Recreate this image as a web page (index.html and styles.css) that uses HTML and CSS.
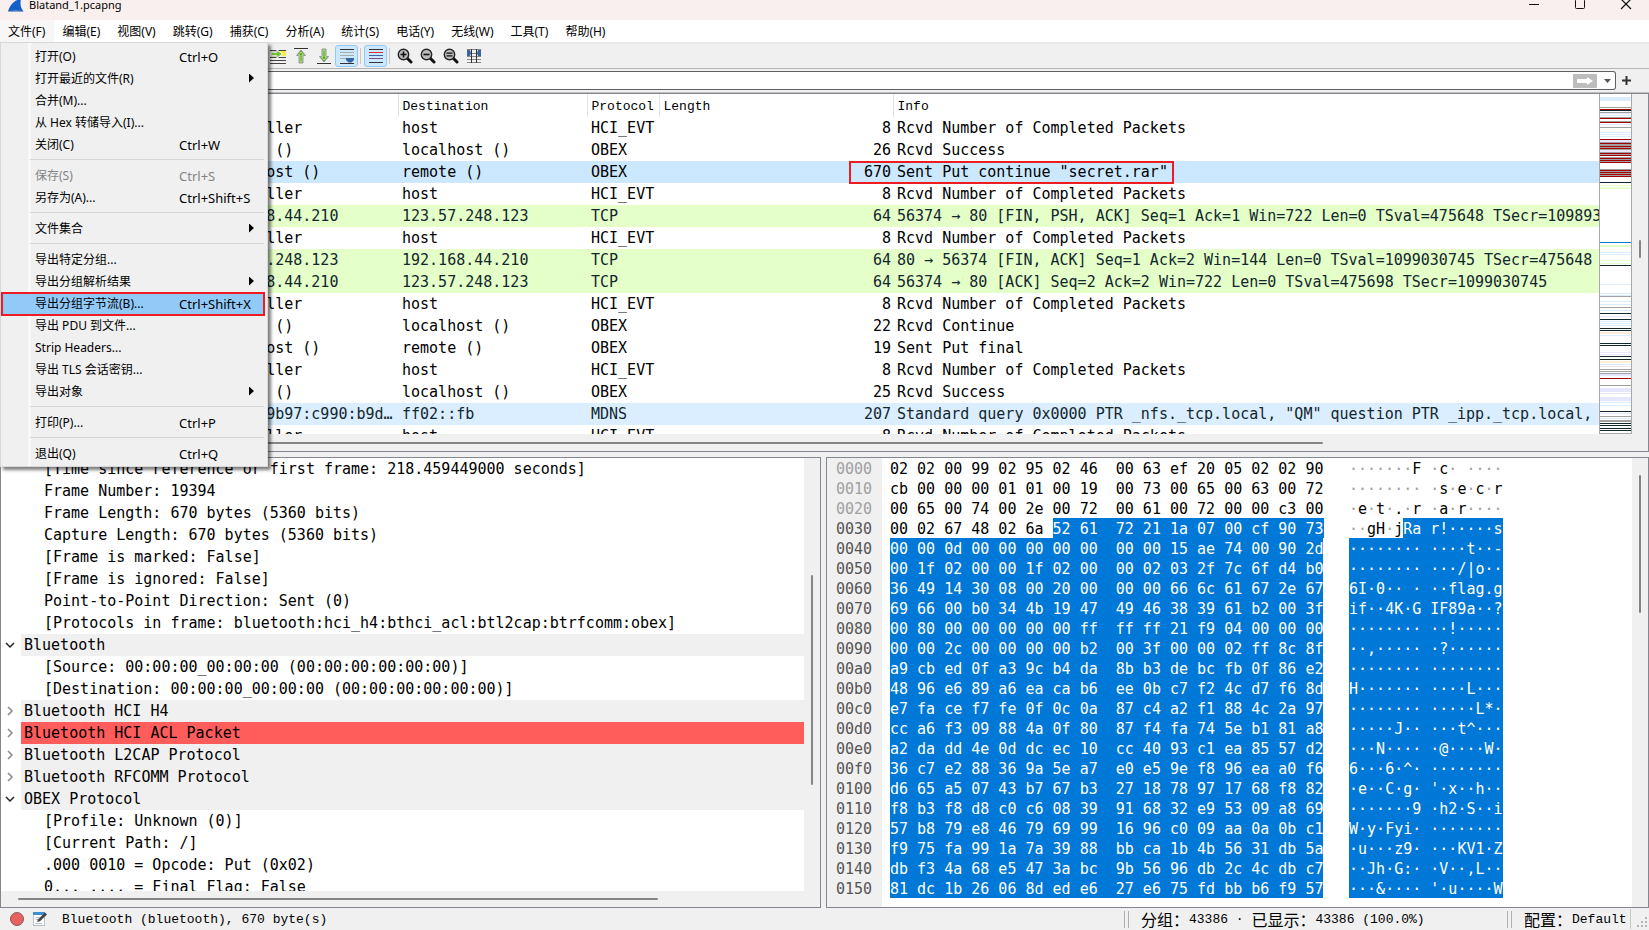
FILE: index.html
```html
<!DOCTYPE html>
<html lang="zh-CN">
<head>
<meta charset="utf-8">
<title>Blatand_1.pcapng</title>
<link rel="stylesheet" href="styles.css">
</head>
<body>
<div class="app">
  <header class="titlebar">
    <svg class="logo" width="16" height="12" viewBox="0 0 16 12"><path d="M0 11.500C2 5 6 0 13 -1C12 4 12.500 8 15.500 11.500Z" fill="#1560c8"/><path d="M0 12C4 10 10 10 15.500 11.500V12Z" fill="#8aa4c4"/></svg>
    <span class="title">Blatand_1.pcapng</span>
    <div class="window-buttons">
      <button aria-label="Minimize"><svg width="12" height="12" viewBox="0 0 12 12"><path d="M1 6.500H11" stroke="#111"/></svg></button>
      <button aria-label="Maximize"><svg width="12" height="12" viewBox="0 0 12 12"><rect x="1.500" y="1.500" width="9" height="9" rx="1" fill="none" stroke="#111"/></svg></button>
      <button aria-label="Close"><svg width="12" height="12" viewBox="0 0 12 12"><path d="M1 1L11 11M11 1L1 11" stroke="#111" stroke-width="1.200"/></svg></button>
    </div>
  </header>

  <nav class="menubar">
    <button class="open">文件(F)</button><button>编辑(E)</button><button>视图(V)</button><button>跳转(G)</button><button>捕获(C)</button><button>分析(A)</button><button>统计(S)</button><button>电话(Y)</button><button>无线(W)</button><button>工具(T)</button><button>帮助(H)</button>
    <div class="menu" role="menu">
      <button class="item"><span>打开(O)</span><kbd>Ctrl+O</kbd></button>
      <button class="item sub"><span>打开最近的文件(R)</span></button>
      <button class="item"><span>合并(M)...</span></button>
      <button class="item"><span>从 Hex 转储导入(I)...</span></button>
      <button class="item"><span>关闭(C)</span><kbd>Ctrl+W</kbd></button>
      <hr>
      <button class="item" disabled><span>保存(S)</span><kbd>Ctrl+S</kbd></button>
      <button class="item"><span>另存为(A)...</span><kbd>Ctrl+Shift+S</kbd></button>
      <hr>
      <button class="item sub"><span>文件集合</span></button>
      <hr>
      <button class="item"><span>导出特定分组...</span></button>
      <button class="item sub"><span>导出分组解析结果</span></button>
      <button class="item active"><span>导出分组字节流(B)...</span><kbd>Ctrl+Shift+X</kbd></button>
      <button class="item"><span>导出 PDU 到文件...</span></button>
      <button class="item"><span>Strip Headers...</span></button>
      <button class="item"><span>导出 TLS 会话密钥...</span></button>
      <button class="item sub"><span>导出对象</span></button>
      <hr>
      <button class="item"><span>打印(P)...</span><kbd>Ctrl+P</kbd></button>
      <hr>
      <button class="item"><span>退出(Q)</span><kbd>Ctrl+Q</kbd></button>
    </div>
  </nav>

  <div class="toolbar">
    <button aria-label="Go to packet"><svg width="16" height="16" viewBox="0 0 16 16"><path d="M0 2.500H16M0 9.500H16M0 12.500H16M0 15.500H16" stroke="#444"/><rect x="10" y="3" width="6" height="5" fill="#fce94f"/><path d="M1 4.500H7V2L12.500 6L7 10V7.500H1Z" fill="#73c22e" stroke="#fff"/><path d="M1 4H7.500M1 8H7.500" stroke="#6a8a50" stroke-width=".6"/></svg></button>
    <button aria-label="First packet"><svg width="16" height="16" viewBox="0 0 16 16"><path d="M1 .5H15" stroke="#333"/><path d="M8 2L12.500 7.500H10V15H6V7.500H3.500Z" fill="#4eaa0a" stroke="#999"/><path d="M8 4L10.500 7H9V14H7V7H5.500Z" fill="#4eaa0a" stroke="#e2f5d0" stroke-width=".7"/></svg></button>
    <button aria-label="Last packet"><svg width="16" height="16" viewBox="0 0 16 16"><path d="M1 15.500H15" stroke="#333"/><path d="M8 14L12.500 8.500H10V1H6V8.500H3.500Z" fill="#4eaa0a" stroke="#999"/><path d="M8 12L10.500 9H9V2H7V9H5.500Z" fill="#4eaa0a" stroke="#e2f5d0" stroke-width=".7"/></svg></button>
    <button class="on" aria-label="Auto scroll"><svg width="16" height="16" viewBox="0 0 16 16"><path d="M1 1.500H15M1 15.500H15" stroke="#333"/><path d="M1 4.500H15M1 7.500H15M1 10.500H15" stroke="#a9ada8"/><path d="M7 10H15V12L12.500 14.500H9.500L7 12Z" fill="#3465a4"/></svg></button>
    <span class="sep"></span>
    <button class="on" aria-label="Colorize"><svg width="16" height="16" viewBox="0 0 16 16"><path d="M1 1.500H15M1 14.500H15" stroke="#333"/><path d="M1 4.500H15" stroke="#ef2929"/><path d="M1 7.500H15" stroke="#3465a4"/><path d="M1 10.500H15" stroke="#75507b"/></svg></button>
    <span class="sep"></span>
    <button aria-label="Zoom in"><svg width="16" height="16" viewBox="0 0 16 16"><path d="M10 10L14 14" stroke="#111" stroke-width="3" stroke-linecap="round"/><circle cx="6.500" cy="6.500" r="5.200" fill="#bbb" stroke="#222" stroke-width="1.400"/><path d="M3.500 6.500H9.500M6.500 3.500V9.500" stroke="#111" stroke-width="1.600"/></svg></button>
    <button aria-label="Zoom out"><svg width="16" height="16" viewBox="0 0 16 16"><path d="M10 10L14 14" stroke="#111" stroke-width="3" stroke-linecap="round"/><circle cx="6.500" cy="6.500" r="5.200" fill="#bbb" stroke="#222" stroke-width="1.400"/><path d="M3.500 6.500H9.500" stroke="#111" stroke-width="1.600"/></svg></button>
    <button aria-label="Normal size"><svg width="16" height="16" viewBox="0 0 16 16"><path d="M10 10L14 14" stroke="#111" stroke-width="3" stroke-linecap="round"/><circle cx="6.500" cy="6.500" r="5.200" fill="#bbb" stroke="#222" stroke-width="1.400"/><path d="M3.500 5.200H9.500M3.500 7.800H9.500" stroke="#111" stroke-width="1.300"/></svg></button>
    <button aria-label="Resize columns"><svg width="16" height="16" viewBox="0 0 16 16"><path d="M1 1.500H15M1 5.500H15M1 8.500H15M1 11.500H15M1 14.500H15" stroke="#888"/><path d="M5.500 1V15M10.500 1V15" stroke="#333"/><path d="M1 2H4L5 5L4 8H1ZM15 2H12L11 5L12 8H15Z" fill="#3465a4"/></svg></button>
  </div>

  <div class="filterbar">
    <div class="filter">
      <input type="text" aria-label="Display filter">
      <button class="apply" aria-label="Apply"><svg width="24" height="14" viewBox="0 0 24 14"><rect width="24" height="14" rx="1" fill="#bdbdbd"/><path d="M4 5H14V3L20 7L14 11V9H4Z" fill="#fff"/></svg></button>
      <button class="drop" aria-label="History"><svg width="7" height="4" viewBox="0 0 7 4"><path d="M0 0H7L3.500 4Z" fill="#555"/></svg></button>
    </div>
    <button class="add" aria-label="Add filter"><svg width="9" height="9" viewBox="0 0 9 9"><path d="M4.500 0V9M0 4.500H9" stroke="#333" stroke-width="2"/></svg></button>
  </div>

  <main class="panes">
    <section class="pane packets">
      <div class="packet-view">
        <table>
          <colgroup><col class="c-src"><col class="c-dst"><col class="c-proto"><col class="c-len"><col></colgroup>
          <thead><tr><th></th><th>Destination</th><th>Protocol</th><th>Length</th><th>Info</th></tr></thead>
          <tbody>
            <tr><td>controller</td><td>host</td><td>HCI_EVT</td><td>8</td><td>Rcvd Number of Completed Packets</td></tr>
            <tr><td>remote ()</td><td>localhost ()</td><td>OBEX</td><td>26</td><td>Rcvd Success</td></tr>
            <tr class="selected"><td>localhost ()</td><td>remote ()</td><td>OBEX</td><td>670</td><td>Sent Put continue "secret.rar"</td></tr>
            <tr><td>controller</td><td>host</td><td>HCI_EVT</td><td>8</td><td>Rcvd Number of Completed Packets</td></tr>
            <tr class="tcp"><td>192.168.44.210</td><td>123.57.248.123</td><td>TCP</td><td>64</td><td>56374 → 80 [FIN, PSH, ACK] Seq=1 Ack=1 Win=722 Len=0 TSval=475648 TSecr=109893</td></tr>
            <tr><td>controller</td><td>host</td><td>HCI_EVT</td><td>8</td><td>Rcvd Number of Completed Packets</td></tr>
            <tr class="tcp"><td>123.57.248.123</td><td>192.168.44.210</td><td>TCP</td><td>64</td><td>80 → 56374 [FIN, ACK] Seq=1 Ack=2 Win=144 Len=0 TSval=1099030745 TSecr=475648</td></tr>
            <tr class="tcp"><td>192.168.44.210</td><td>123.57.248.123</td><td>TCP</td><td>64</td><td>56374 → 80 [ACK] Seq=2 Ack=2 Win=722 Len=0 TSval=475698 TSecr=1099030745</td></tr>
            <tr><td>controller</td><td>host</td><td>HCI_EVT</td><td>8</td><td>Rcvd Number of Completed Packets</td></tr>
            <tr><td>remote ()</td><td>localhost ()</td><td>OBEX</td><td>22</td><td>Rcvd Continue</td></tr>
            <tr><td>localhost ()</td><td>remote ()</td><td>OBEX</td><td>19</td><td>Sent Put final</td></tr>
            <tr><td>controller</td><td>host</td><td>HCI_EVT</td><td>8</td><td>Rcvd Number of Completed Packets</td></tr>
            <tr><td>remote ()</td><td>localhost ()</td><td>OBEX</td><td>25</td><td>Rcvd Success</td></tr>
            <tr class="mdns"><td>fe80::9b97:c990:b9d…</td><td>ff02::fb</td><td>MDNS</td><td>207</td><td>Standard query 0x0000 PTR _nfs._tcp.local, "QM" question PTR _ipp._tcp.local,</td></tr>
            <tr><td>controller</td><td>host</td><td>HCI_EVT</td><td>8</td><td>Rcvd Number of Completed Packets</td></tr>
          </tbody>
        </table>
        <div class="mark"></div>
      </div>
      <svg class="minimap" viewBox="0 0 30 340" preserveAspectRatio="none" shape-rendering="crispEdges"></svg>
      <div class="vscroll"><span class="thumb packets-v"></span></div>
      <div class="hscroll"><span class="thumb packets-h"></span></div>
    </section>

    <div class="lower">
      <section class="pane details">
        <ul class="tree">
          <li class="leaf">[Time since reference or first frame: 218.459449000 seconds]</li>
          <li class="leaf">Frame Number: 19394</li>
          <li class="leaf">Frame Length: 670 bytes (5360 bits)</li>
          <li class="leaf">Capture Length: 670 bytes (5360 bits)</li>
          <li class="leaf">[Frame is marked: False]</li>
          <li class="leaf">[Frame is ignored: False]</li>
          <li class="leaf">Point-to-Point Direction: Sent (0)</li>
          <li class="leaf">[Protocols in frame: bluetooth:hci_h4:bthci_acl:btl2cap:btrfcomm:obex]</li>
          <li class="node"><svg width="10" height="10" viewBox="0 0 10 10"><path d="M1 3L5 7L9 3"/></svg><span>Bluetooth</span></li>
          <li class="leaf">[Source: 00:00:00_00:00:00 (00:00:00:00:00:00)]</li>
          <li class="leaf">[Destination: 00:00:00_00:00:00 (00:00:00:00:00:00)]</li>
          <li class="node closed"><svg width="10" height="10" viewBox="0 0 10 10"><path d="M3 1L7 5L3 9"/></svg><span>Bluetooth HCI H4</span></li>
          <li class="node closed error"><svg width="10" height="10" viewBox="0 0 10 10"><path d="M3 1L7 5L3 9"/></svg><span>Bluetooth HCI ACL Packet</span></li>
          <li class="node closed"><svg width="10" height="10" viewBox="0 0 10 10"><path d="M3 1L7 5L3 9"/></svg><span>Bluetooth L2CAP Protocol</span></li>
          <li class="node closed"><svg width="10" height="10" viewBox="0 0 10 10"><path d="M3 1L7 5L3 9"/></svg><span>Bluetooth RFCOMM Protocol</span></li>
          <li class="node"><svg width="10" height="10" viewBox="0 0 10 10"><path d="M1 3L5 7L9 3"/></svg><span>OBEX Protocol</span></li>
          <li class="leaf">[Profile: Unknown (0)]</li>
          <li class="leaf">[Current Path: /]</li>
          <li class="leaf">.000 0010 = Opcode: Put (0x02)</li>
          <li class="leaf">0... .... = Final Flag: False</li>
        </ul>
        <div class="vscroll"><span class="thumb details-v"></span></div>
        <div class="hscroll"><span class="thumb details-h"></span></div>
      </section>
      <section class="pane bytes">
        <div class="offsets"></div>
        <div class="hex"></div>
        <div class="ascii"></div>
        <div class="vscroll"><span class="thumb bytes-v"></span></div>
      </section>
    </div>
  </main>

  <footer class="statusbar">
    <button aria-label="Expert info"><svg width="16" height="16" viewBox="0 0 16 16"><circle cx="8" cy="8" r="6.500" fill="#e8605f" stroke="#8a5a5a"/></svg></button>
    <button aria-label="Capture comment"><svg width="16" height="16" viewBox="0 0 16 16"><rect x="1.500" y="1.500" width="11" height="13" fill="#fdfdfd" stroke="#b5c0c8"/><rect x="1" y="1" width="12" height="3" fill="#3c8fd0"/><path d="M3.500 6.500H10M3.500 8.500H9M3.500 12.500H10" stroke="#b8c4cc"/><path d="M5 11L6 8.500L13 1.500L15 3.500L8 10.300Z" fill="#444"/></svg></button>
    <span class="field">Bluetooth (bluetooth), 670 byte(s)</span>
    <span class="grip-line"></span>
    <span class="counts"><b>分组：</b><span>43386 · </span><b>已显示：</b><span>43386 (100.0%)</span></span>
    <span class="grip-line"></span>
    <span class="profile"><b>配置：</b><span>Default</span></span>
    <svg class="size-grip" width="12" height="12" viewBox="0 0 12 12"><path d="M9 1h2v2h-2zM5 5h2v2h-2zM9 5h2v2h-2zM1 9h2v2h-2zM5 9h2v2h-2zM9 9h2v2h-2z" fill="#b4b4b4"/></svg>
  </footer>
</div>
<script src="app.js"></script>
</body>
</html>
```
FILE: styles.css
```css
* { box-sizing: border-box; }
body { margin: 0; background: #f0f0f0; color: #000; font: 12px/22px "Noto Sans", "Noto Sans CJK SC", sans-serif; }
button { border: 0; margin: 0; padding: 0; background: none; font: inherit; color: inherit; }
svg { display: block; flex: none; }
.app { height: 100vh; display: flex; flex-direction: column; overflow: hidden; }

.titlebar { height: 20px; flex: none; display: flex; align-items: flex-start; background: #f9efef; padding-left: 8px; font-size: 11px; line-height: 10px; }
.title { margin-left: 5px; flex: 1; }
.window-buttons { display: flex; padding-right: 17px; gap: 34px; }
.window-buttons svg { margin-top: -2px; }

.menubar { position: relative; z-index: 5; height: 22px; flex: none; display: flex; background: #fff; }
.menubar > button { padding: 2px 9px 0 8px; line-height: 20px; white-space: nowrap; }
.menubar > .open { background: #f7f7f7; }
.menu { position: absolute; left: 0; top: 22px; width: 268px; padding: 3px 3px 1px 1px; background: linear-gradient(90deg, #f0f0f0 27px, #f8f8f8 27px, #f8f8f8 30px, #f0f0f0 30px); border: 1px solid #d8d8d8; box-shadow: 3px 3px 3px rgba(0,0,0,.5); }
.item { display: flex; width: 100%; height: 22px; padding-left: 33px; text-align: left; position: relative; white-space: nowrap; }
.item span { width: 144px; flex: none; }
.item kbd { font: inherit; font-size: 13px; line-height: 22px; }
.item:disabled { color: #838383; }
.item.sub { align-items: center; }
.item.sub::after { content: ""; margin: 0 10px 2px auto; width: 5px; height: 9px; background: #000; clip-path: polygon(0 0, 100% 50%, 0 100%); }
.item.active { background: #91c9f7; outline: 2px solid #ed1c24; outline-offset: -1px; }
.menu hr { height: 9px; border: 0; margin: 0 0 0 28px; background: linear-gradient(#d5d5d5, #d5d5d5) 0 3px / 100% 1px no-repeat; }

.toolbar { height: 27px; flex: none; display: flex; align-items: center; padding: 0 0 1px 266px; border-top: 2px solid #e8e8e8; border-bottom: 1px solid #b5b5b5; }
.toolbar button { width: 23px; height: 22px; display: grid; place-items: center; border-radius: 3px; }
.toolbar .on { background: #cce8ff; border: 1px solid #90c8f6; }
.toolbar .sep { width: 6px; height: 16px; background: linear-gradient(#c8c8c8, #c8c8c8) 2px 0 / 1px 100% no-repeat; }

.filterbar { height: 24px; flex: none; display: flex; align-items: center; padding: 2px 18px 2px 0; border-bottom: 1px solid #c0c0c0; }
.filter { flex: 1; height: 19px; display: flex; align-items: center; background: #fff; border: 1px solid #606060; border-left: 0; border-radius: 0 3px 3px 0; padding-right: 4px; }
.filter input { flex: 1; min-width: 0; height: 16px; border: 0; outline: 0; background: none; font: inherit; }
.filter .drop { margin-left: 7px; }
.add { margin-left: 6px; }

.panes { flex: 1; min-height: 0; display: grid; grid-template-rows: minmax(0, 359fr) minmax(0, 451fr); gap: 5px; }
.pane { background: #fff; border: 1px solid #828790; display: grid; min-width: 0; min-height: 0; overflow: hidden; }
.packets, .tree, .bytes { font: 15px/22px "DejaVu Sans Mono", monospace; }
.packets { grid-template: minmax(0, 1fr) 17px / minmax(0, 1fr) 33px 16px; border-left: 0; }
.packet-view { position: relative; overflow: hidden; }
table { width: 100%; table-layout: fixed; border-collapse: collapse; }
.c-src { width: 398px; } .c-dst { width: 189px; } .c-proto { width: 72px; } .c-len { width: 234px; }
td, th { padding: 0 0 0 4px; height: 22px; white-space: pre; overflow: hidden; }
th { height: 23px; text-align: left; padding-top: 2px; font: 13px/20px "Liberation Mono", monospace; border-left: 1px solid #e2e2e2; }
th:first-child { border-left: 0; }
td:first-child { padding-left: 212px; }
td:nth-child(4) { text-align: right; padding-right: 2px; }
.selected { background: #cce8ff; }
.tcp { background: #e4ffc7; color: #12272e; }
.mdns { background: #daeeff; color: #12272e; }
.mark { position: absolute; left: 849px; top: 67px; width: 325px; height: 23px; border: 2px solid #ed1c24; }
.minimap { width: 33px; height: 100%; border: solid #a9a9a9; border-width: 0 1px 1px; background: #fff; }
.vscroll, .hscroll { background: #f0f0f0; display: flex; }
.hscroll { grid-column: 1 / -1; align-items: center; }
.vscroll { flex-direction: column; align-items: center; }
.thumb { background: #858585; border-radius: 1px; }
.vscroll .thumb { width: 2px; } .hscroll .thumb { height: 2px; }
.packets-v { height: 18px; margin-top: 146px; }
.packets-h { width: 80%; margin-left: 5px; }
.details-v { height: 210px; margin-top: 117px; }
.details-h { width: 640px; margin-left: 17px; }
.bytes-v { height: 138px; margin-top: 17px; }

.lower { display: grid; grid-template-columns: minmax(0, 821fr) minmax(0, 823fr); gap: 5px; }
.details { grid-template: minmax(0, 1fr) 16px / minmax(0, 1fr) 16px; }
.tree { margin: 0; padding: 0; list-style: none; overflow: hidden; white-space: nowrap; }
.tree li { height: 22px; }
.leaf { padding-left: 43px; }
.node { display: flex; align-items: center; gap: 6px; padding-left: 4px; }
.node span { flex: 1; background: #f0f0f0; padding-left: 3px; }
.node path { fill: none; stroke: #222; stroke-width: 1.5; }
.closed path { stroke: #888; }
.error span { background: #ff5c5c; }

.bytes { grid-template-columns: 55px 467px minmax(0, 1fr) 16px; }
.offsets { background: #f0f0f0; padding-left: 9px; color: #555; }
.offsets .dim, .ascii i { color: #a0a0a0; font-style: normal; }
.hex { padding-left: 8px; }
.row { height: 20px; display: flex; white-space: pre; line-height: 22px; }
.row span { height: 20px; }
.sel, .sel i { background: #0078d7; color: #fff; }
.ascii .sel i { background: none; color: #fff; }

.statusbar { height: 22px; flex: none; display: flex; align-items: center; padding: 0 1px 0 9px; font: 13px/20px "Liberation Mono", monospace; white-space: nowrap; }
.statusbar button + button { margin-left: 7px; }
.statusbar b { font: 16px/20px "Noto Sans CJK SC", sans-serif; }
.statusbar span span { white-space: pre; padding-top: 2px; }
.field { margin-left: 14px; padding-top: 2px; flex: 1; }
.grip-line { width: 5px; height: 17px; border: solid #b0b0b0; border-width: 0 1px; }
.counts, .profile { display: flex; align-items: center; height: 20px; padding-left: 12px; }
.counts { width: 378px; }
.profile { width: 119px; border-right: 1px solid #c8c8c8; }
.size-grip { margin: 6px 0 0 5px; }
```
FILE: app.js
```js
const dump = `02 02 00 99 02 95 02 46 00 63 ef 20 05 02 02 90
cb 00 00 00 01 01 00 19 00 73 00 65 00 63 00 72
00 65 00 74 00 2e 00 72 00 61 00 72 00 00 c3 00
00 02 67 48 02 6a 52 61 72 21 1a 07 00 cf 90 73
00 00 0d 00 00 00 00 00 00 00 15 ae 74 00 90 2d
00 1f 02 00 00 1f 02 00 00 02 03 2f 7c 6f d4 b0
36 49 14 30 08 00 20 00 00 00 66 6c 61 67 2e 67
69 66 00 b0 34 4b 19 47 49 46 38 39 61 b2 00 3f
00 80 00 00 00 00 00 ff ff ff 21 f9 04 00 00 00
00 00 2c 00 00 00 00 b2 00 3f 00 00 02 ff 8c 8f
a9 cb ed 0f a3 9c b4 da 8b b3 de bc fb 0f 86 e2
48 96 e6 89 a6 ea ca b6 ee 0b c7 f2 4c d7 f6 8d
e7 fa ce f7 fe 0f 0c 0a 87 c4 a2 f1 88 4c 2a 97
cc a6 f3 09 88 4a 0f 80 87 f4 fa 74 5e b1 81 a8
a2 da dd 4e 0d dc ec 10 cc 40 93 c1 ea 85 57 d2
36 c7 e2 88 36 9a 5e a7 e0 e5 9e f8 96 ea a0 f6
d6 65 a5 07 43 b7 67 b3 27 18 78 97 17 68 f8 82
f8 b3 f8 d8 c0 c6 08 39 91 68 32 e9 53 09 a8 69
57 b8 79 e8 46 79 69 99 16 96 c0 09 aa 0a 0b c1
f9 75 fa 99 1a 7a 39 88 bb ca 1b 4b 56 31 db 5a
db f3 4a 68 e5 47 3a bc 9b 56 96 db 2c 4c db c7
81 dc 1b 26 06 8d ed e6 27 e6 75 fd bb b6 f9 57`;
const SELECTED_FROM = 54;

const escapeHtml = s => s.replace(/&/g, "&amp;").replace(/</g, "&lt;");
const dots = s => escapeHtml(s).replace(/·+/g, "<i>$&</i>");
const split = (text, at, format) =>
  `<div class="row"><span>${format(text.slice(0, at))}</span><span class="sel">${format(text.slice(at))}</span></div>`;

let offsets = "", hex = "", ascii = "";
dump.split("\n").forEach((line, r) => {
  const bytes = line.split(" ");
  const chars = bytes.map(b => {
    const n = parseInt(b, 16);
    return n >= 32 && n < 127 ? String.fromCharCode(n) : "·";
  }).join("");
  const first = Math.min(16, Math.max(0, SELECTED_FROM - r * 16));
  const gap = first >= 8 ? 1 : 0;
  offsets += `<div class="row${r < 3 ? " dim" : ""}">${(r * 16).toString(16).padStart(4, "0")}</div>`;
  hex += split(bytes.slice(0, 8).join(" ") + "  " + bytes.slice(8).join(" "), first * 3 + gap, escapeHtml);
  ascii += split(chars.slice(0, 8) + " " + chars.slice(8), first + gap, dots);
});
document.querySelector(".offsets").innerHTML = offsets;
document.querySelector(".hex").innerHTML = hex;
document.querySelector(".ascii").innerHTML = ascii;

// Minimap stripes: [top, height, colour key]
const colours = { b: "#daeeff", g: "#a0a0a0", r: "#a40000", k: "#12272e", v: "#e7e6ff", y: "#e4ffc7", o: "#ffeed6", s: "#0078d7" };
const stripes = [[3,4,"b"],[13,1,"g"],[15,1,"r"],[16,1,"k"],[18,1,"g"],[19,1,"v"],[21,1,"b"],[23,1,"g"],[24,1,"r"],
[27,1,"g"],[28,1,"r"],[30,1,"b"],[33,1,"g"],[38,1,"b"],[40,1,"b"],[42,1,"b"],[45,1,"r"],[46,2,"v"],[48,1,"g"],[49,1,"r"],
[50,1,"g"],[51,1,"g"],[52,1,"r"],[53,1,"g"],[54,1,"r"],[55,1,"g"],[56,2,"v"],[58,1,"g"],[59,1,"r"],[60,1,"g"],[61,1,"r"],
[63,1,"g"],[64,1,"r"],[65,1,"g"],[66,1,"r"],[67,1,"g"],[68,1,"r"],[75,1,"g"],[76,1,"r"],[77,1,"g"],[78,1,"r"],[79,1,"g"],
[80,1,"r"],[81,1,"g"],[82,1,"r"],[88,1,"k"],[91,1,"y"],[93,2,"y"],[148,1,"s"],[151,2,"y"],[158,1,"b"],[160,1,"b"],
[166,1,"y"],[169,2,"y"],[172,1,"k"],[191,1,"b"],[200,1,"b"],[202,1,"b"],[203,1,"g"],[208,1,"b"],[211,1,"b"],[214,1,"g"],
[217,1,"b"],[220,1,"k"],[223,1,"v"],[226,1,"k"],[228,1,"b"],[230,1,"b"],[232,1,"b"],[235,1,"k"],[237,1,"k"],[239,2,"o"],
[242,1,"b"],[250,1,"k"],[252,1,"k"],[259,1,"v"],[261,1,"v"],[263,1,"k"],[266,1,"k"],[268,2,"o"],[271,1,"b"],[273,1,"v"],
[276,1,"g"],[278,1,"g"],[280,1,"g"],[281,2,"v"],[285,1,"r"],[292,1,"g"],[295,4,"v"],[300,1,"v"],[304,4,"v"],[309,1,"b"],
[312,1,"b"],[318,1,"k"],[320,1,"v"],[323,1,"g"],[325,1,"b"],[327,2,"g"],[330,1,"k"],[332,1,"k"],[335,1,"k"],[337,1,"k"]];
document.querySelector(".minimap").innerHTML = stripes
  .map(([y, h, c]) => `<rect y="${y}" width="30" height="${h}" fill="${colours[c]}"/>`).join("");
```
